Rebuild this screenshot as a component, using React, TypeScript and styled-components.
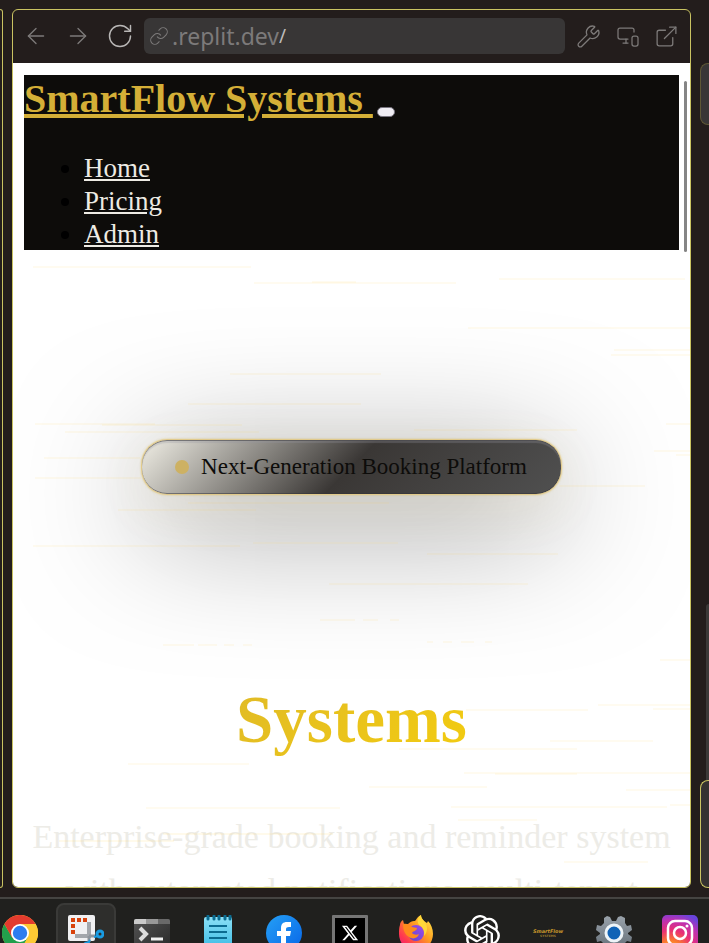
import React from "react";
import styled, { createGlobalStyle, css } from "styled-components";
import { ExternalLink, Link, MonitorSmartphone, RotateCw, Wrench, ArrowLeft, ArrowRight } from "lucide-react";
import { SiOpenai } from "react-icons/si";
import { FaXTwitter } from "react-icons/fa6";

const outline = "#c9c362";

const GlobalStyle = createGlobalStyle`
  * { box-sizing: border-box; }
  body { margin: 0; background: #231d1c; }
  button { font: inherit; }
`;

const Desktop = styled.div`
  display: flex;
  flex-direction: column;
  height: 100vh;
  overflow: hidden;
  background: #231d1c;
`;

const Workspace = styled.main`
  flex: 1;
  min-height: 0;
  display: flex;
  gap: 9px;
  padding: 9px 0;
`;

const EdgePane = styled.div`
  width: 3px;
  border: 1px solid ${outline};
  border-left: 0;
  border-radius: 0 6px 6px 0;
`;

const BrowserPane = styled.section`
  flex: 1;
  min-width: 0;
  display: flex;
  flex-direction: column;
  border: 1px solid ${outline};
  border-radius: 6px;
  overflow: hidden;
`;

const Toolbar = styled.header`
  display: flex;
  align-items: center;
  height: 53px;
  padding: 0 4px 1px 2px;
`;

const ToolButton = styled.button<{ $bright?: boolean; $narrow?: boolean }>`
  display: flex;
  align-items: center;
  justify-content: center;
  width: ${(p) => (p.$narrow ? 39 : 42)}px;
  height: 36px;
  padding: 0;
  border: 0;
  background: none;
  color: ${(p) => (p.$bright ? "#b9b7b6" : "#7d7a79")};
`;

const ToolGroup = styled.div`
  display: flex;
  margin-left: 4px;
`;

const AddressBar = styled.form`
  flex: 1;
  min-width: 0;
  display: flex;
  align-items: center;
  height: 36px;
  margin-left: 3px;
  padding: 0 5px;
  border-radius: 6px;
  background: #383636;
  color: #7c7a7a;
  font-family: "Noto Sans", sans-serif;
`;

const AddressHost = styled.label`
  display: flex;
  align-items: center;
  gap: 3px;
  font-size: 23px;
  line-height: 36px;
`;

const AddressPath = styled.input`
  flex: 1;
  min-width: 0;
  padding: 0;
  border: 0;
  outline: 0;
  background: none;
  color: #bdbbbb;
  font-family: inherit;
  font-size: 19px;
  line-height: 36px;
`;

const Page = styled.div`
  position: relative;
  flex: 1;
  min-height: 0;
  padding: 12px 11px 0;
  overflow: hidden;
  background: #fff;
  color: #000;
  font-family: "Liberation Serif", serif;
  font-size: 27px;
`;

const ScrollThumb = styled.div`
  position: absolute;
  top: 18px;
  right: 3px;
  width: 3px;
  height: 171px;
  border-radius: 2px;
  background: #858585;
`;

const StreakLayer = styled.svg`
  position: absolute;
  inset: 0;
  width: 100%;
  height: 100%;
  pointer-events: none;
`;

const SiteNav = styled.nav`
  height: 175px;
  background: #0d0c0a;
`;

const BrandRow = styled.div`
  display: flex;
  align-items: flex-start;
  height: 48px;
  line-height: 48px;
`;

const Brand = styled.a`
  color: #d4af37;
  font-size: 40px;
  font-weight: 700;
  text-decoration-thickness: 4px;
  white-space: pre;
`;

const MenuToggle = styled.button`
  width: 18px;
  height: 10px;
  margin: 32px 0 0 4px;
  padding: 0;
  border: 1px solid #77747f;
  border-radius: 5px;
  background: #efedf3;
`;

const NavList = styled.ul`
  margin: 29px 0 0;
  padding: 0 0 0 60px;
  line-height: 33px;
`;

const NavLink = styled.a`
  color: #edebe4;
`;

const Hero = styled.section`
  display: flex;
  flex-direction: column;
  align-items: center;
  padding-top: 189px;
`;

const Badge = styled.div`
  display: flex;
  align-items: center;
  gap: 12px;
  height: 56px;
  padding: 0 34px 0 33px;
  border: 1px solid rgba(212, 180, 90, 0.7);
  border-radius: 26px;
  background: linear-gradient(135deg, #f0eee5 0%, #3a3735 50%, #505050 100%) padding-box;
  box-shadow:
    0 0 2px rgba(212, 175, 55, 0.6),
    0 13px 53px rgba(212, 175, 55, 0.08),
    0 26px 132px rgba(0, 0, 0, 0.52),
    inset 0 1px 0 rgba(70, 70, 75, 0.6),
    inset 0 3px 1px rgba(150, 150, 160, 0.3),
    inset 0 -1px 0 rgba(50, 50, 60, 0.5);
  color: #0d0c0a;
  font-size: 23px;
  white-space: nowrap;
`;

const BadgeDot = styled.span`
  width: 14px;
  height: 14px;
  border-radius: 50%;
  background: #cdb163;
`;

const Title = styled.h1`
  align-self: stretch;
  margin: 184px 0 0;
  background: linear-gradient(135deg, #d4af37 0%, #ffd700 100%);
  background-clip: text;
  -webkit-background-clip: text;
  color: transparent;
  font-size: 67px;
  line-height: 80px;
  text-align: center;
`;

const Lead = styled.p`
  margin: 51px 0 0;
  color: #edece7;
  font-size: 34px;
  line-height: 54px;
  text-align: center;
`;

const SideColumn = styled.aside`
  display: flex;
  flex-direction: column;
  align-items: flex-end;
  width: 9px;
  padding-top: 54px;
`;

const SideCard = styled.div<{ $kind: "muted" | "rail" | "outlined" }>`
  ${(p) =>
    p.$kind === "muted" &&
    css`
      width: 9px;
      height: 62px;
      border: 1px solid #5d5735;
      border-right: 0;
      border-radius: 8px 0 0 8px;
      background: #383636;
    `}
  ${(p) =>
    p.$kind === "rail" &&
    css`
      width: 3px;
      height: 176px;
      margin-top: auto;
      border-radius: 3px 0 0 0;
      background: #3b3938;
    `}
  ${(p) =>
    p.$kind === "outlined" &&
    css`
      width: 9px;
      height: 108px;
      border: 1px solid ${outline};
      border-right: 0;
      border-radius: 8px 0 0 8px;
      background: #343131;
    `}
`;

const Taskbar = styled.footer`
  display: flex;
  gap: 6px;
  height: 46px;
  padding-top: 4px;
  border-top: 2px solid #454442;
  overflow: hidden;
  background: #20201e;
`;

const TaskButton = styled.button<{ $active?: boolean }>`
  flex: none;
  display: flex;
  align-items: center;
  justify-content: center;
  width: 60px;
  height: 60px;
  padding: 0;
  border: 2px solid ${(p) => (p.$active ? "#3a3a38" : "transparent")};
  border-radius: 8px;
  background: ${(p) => (p.$active ? "#2e2e2c" : "none")};
  color: #fff;
  &:first-child { margin-left: -10px; }
`;

const XTile = styled.span`
  display: flex;
  align-items: center;
  justify-content: center;
  width: 36px;
  height: 36px;
  border: 3px solid #757575;
  border-radius: 1px;
  background: #000;
  font-size: 18px;
`;

const BrandMark = styled.span`
  display: flex;
  flex-direction: column;
  align-items: center;
  color: #c9992b;
  font: italic 700 5px/6px "DejaVu Sans", sans-serif;
  small { color: #9a7a2c; font: 700 3px/4px "DejaVu Sans", sans-serif; }
`;

/* x1, x2, y, opacity */
const streaks: [number, number, number, number?][] = [
  [20, 238, 204], [241, 443, 220], [299, 343, 219], [486, 672, 216], [455, 677, 265],
  [601, 677, 287], [598, 677, 292], [217, 368, 311], [175, 348, 341], [22, 142, 361],
  [89, 229, 362], [52, 246, 369], [401, 564, 367], [653, 677, 361], [31, 127, 395],
  [22, 128, 415], [641, 677, 388], [663, 677, 392], [546, 632, 423], [175, 376, 440],
  [105, 243, 447], [20, 227, 483], [240, 385, 480], [414, 545, 491], [316, 515, 521],
  [307, 342, 557], [350, 365, 557], [377, 386, 557], [150, 181, 582], [185, 204, 582],
  [211, 221, 582], [230, 239, 582], [414, 420, 579], [430, 439, 579], [448, 461, 579],
  [472, 479, 579], [647, 677, 597], [585, 677, 642], [640, 677, 646], [453, 575, 647],
  [537, 640, 678], [386, 564, 686], [115, 236, 701], [451, 677, 710], [482, 564, 711],
  [356, 474, 724], [613, 677, 727], [657, 677, 742], [133, 327, 745], [438, 654, 744],
  [445, 524, 757], [150, 320, 771, 0.12], [46, 161, 778, 0.12], [551, 635, 799],
];

const Streaks = () => (
  <StreakLayer viewBox="0 0 677 824" preserveAspectRatio="xMidYMin slice" aria-hidden="true">
    {streaks.map(([x1, x2, y, o], i) => (
      <line key={i} x1={x1} x2={x2} y1={y} y2={y} stroke="#ffd75e" strokeWidth="2" strokeOpacity={o ?? 0.09} />
    ))}
  </StreakLayer>
);

const ChromeIcon = () => (
  <svg width="36" height="36" viewBox="0 0 36 36">
    <circle cx="18" cy="18" r="18" fill="#fcc934" />
    <path d="M2.4 9A18 18 0 0 0 18 36L25.8 22.5 10.2 22.5Z" fill="#229f4c" />
    <path d="M18 9h15.600A18 18 0 0 1 18 36L25.800 22.500Z" fill="#fcc934" />
    <path d="M2.400 9A18 18 0 0 1 33.600 9H18L10 22.500Z" fill="#e33b2e" />
    <circle cx="18" cy="18" r="9" fill="#fff" />
    <circle cx="18" cy="18" r="7.200" fill="#2d7df0" />
  </svg>
);

const SnipIcon = () => (
  <svg width="36" height="36" viewBox="0 0 36 36">
    <rect width="27" height="26" rx="2" fill="#f0f0f2" />
    <path d="M19 7h4v16H7v-4h12Z" fill="#a3a6ab" />
    <path d="M3 3h4v4H3zM9 3h4v4H9zM15 3h4v4h-4zM3 9h4v4H3zM3 15h4v4H3z" fill="#d8410b" />
    <path d="M21 21h6M21 21v6" stroke="#8f959d" strokeWidth="3" />
    <circle cx="32" cy="19" r="3" fill="none" stroke="#199be2" strokeWidth="3" />
    <circle cx="19" cy="31" r="3" fill="none" stroke="#199be2" strokeWidth="3" />
    <path d="m26 22 4-1M22 25l-2 3" stroke="#199be2" strokeWidth="2" />
  </svg>
);

const TerminalIcon = () => (
  <svg width="36" height="36" viewBox="0 0 36 36">
    <defs>
      <linearGradient id="term" x1="0" y1="0" x2="1" y2="1">
        <stop offset="0" stopColor="#535353" /><stop offset="1" stopColor="#292929" />
      </linearGradient>
    </defs>
    <rect y="4" width="36" height="32" rx="2" fill="url(#term)" />
    <path d="M0 9V6a2 2 0 0 1 2-2h10v5Z" fill="#cacaca" />
    <path d="M12 4h12v5H12Z" fill="#989898" />
    <path d="M24 4h10a2 2 0 0 1 2 2v3H24Z" fill="#696969" />
    <path d="m6 13 6 6-6 6" fill="none" stroke="#dcdcdc" strokeWidth="4" />
    <path d="M17 24h12" stroke="#f1f1f1" strokeWidth="3" />
  </svg>
);

const NotepadIcon = () => (
  <svg width="36" height="36" viewBox="0 0 36 36">
    <defs>
      <linearGradient id="note" x1="0" y1="0" x2="0" y2="1">
        <stop offset="0" stopColor="#8ce0f5" /><stop offset="1" stopColor="#35b9e4" />
      </linearGradient>
    </defs>
    <rect x="4" y="2" width="28" height="34" rx="2" fill="url(#note)" />
    <path d="M8 1v3M14 1v3M19 1v3M25 1v3M30 1v3" stroke="#0b6c91" strokeWidth="3" strokeLinecap="round" />
    <path d="M9 11h18M9 17h18M9 23h18M9 29h10" stroke="#0b6c91" strokeWidth="2" />
  </svg>
);

const FacebookIcon = () => (
  <svg width="36" height="36" viewBox="0 0 36 36">
    <defs>
      <linearGradient id="fb" x1="0" y1="0" x2="1" y2="1">
        <stop offset="0" stopColor="#25a0f5" /><stop offset="1" stopColor="#0866e8" />
      </linearGradient>
    </defs>
    <circle cx="18" cy="18" r="18" fill="url(#fb)" />
    <path d="M15 36V21h-4v-5h4v-3c0-4 2-6 6-6h4v5h-2c-2 0-3 .8-3 2v2h5l-1 5h-4v15Z" fill="#fff" />
  </svg>
);

const FirefoxIcon = () => (
  <svg width="36" height="36" viewBox="0 0 36 36">
    <defs>
      <linearGradient id="fox" x1="1" y1="0" x2="0" y2="1">
        <stop offset="0" stopColor="#fff34d" /><stop offset="0.400" stopColor="#ff9c20" />
        <stop offset="0.750" stopColor="#ff3650" /><stop offset="1" stopColor="#e31587" />
      </linearGradient>
      <linearGradient id="globe" x1="1" y1="0" x2="0" y2="1">
        <stop offset="0" stopColor="#a04bec" /><stop offset="1" stopColor="#5b46c9" />
      </linearGradient>
    </defs>
    <path d="M2 10c0-2 1-4 3-5l1 4 4 0c2-2 4-3 6-3l1 0c2-2 2-4 6-6 0 4 3 6 6 8l1-2c3 3 5 8 5 13a17 17 0 0 1-34 0c0-4 0-6 1-9Z" fill="url(#fox)" />
    <circle cx="18" cy="18" r="8" fill="url(#globe)" />
    <path d="M5 9c3-1 7 0 9 3l5 1c0 3-4 3-5 5 2 2 5 2 7 1-1 4-6 6-10 3C7 20 5 15 5 9Z" fill="#ff8a1c" />
    <path d="M23 0c-4 3-4 7-2 10 4 2 6 6 5 11 4-4 4-11 0-15-2-2-3-4-3-6Z" fill="#ffd83a" />
  </svg>
);

const GearIcon = () => (
  <svg width="36" height="36" viewBox="0 0 36 36">
    <defs>
      <linearGradient id="gear" x1="0" y1="0" x2="0" y2="1">
        <stop offset="0" stopColor="#99a2aa" /><stop offset="1" stopColor="#626c76" />
      </linearGradient>
    </defs>
    <path d="M11 1l3 1 2 4h4l2-4 3-1 4 2v5l2 3 4-1 1 5-4 3 0 1 4 3-1 5-4-1-3 3v5l-5 2-3-4h-4l-3 4-5-2v-5l-3-3-4 1-1-5 4-3 0-1-4-3 1-5 4 1 3-3V3Z" fill="url(#gear)" strokeLinejoin="round" />
    <circle cx="18" cy="18" r="8" fill="#1063b6" stroke="#eef4f8" strokeWidth="3" />
  </svg>
);

const InstagramIcon = () => (
  <svg width="36" height="36" viewBox="0 0 36 36">
    <defs>
      <radialGradient id="ig" cx="0.250" cy="1.050" r="1.150">
        <stop offset="0" stopColor="#ffd13f" /><stop offset="0.300" stopColor="#fb7a2d" />
        <stop offset="0.550" stopColor="#e92f75" /><stop offset="0.800" stopColor="#bb31b4" />
        <stop offset="1" stopColor="#6844dc" />
      </radialGradient>
    </defs>
    <rect width="36" height="36" rx="5" fill="url(#ig)" />
    <rect x="6" y="6" width="24" height="24" rx="7" fill="none" stroke="#fff" strokeWidth="2.500" />
    <circle cx="18" cy="18" r="6" fill="none" stroke="#fff" strokeWidth="2.500" />
    <circle cx="25" cy="11" r="1.500" fill="#fff" />
  </svg>
);

const tasks: { name: string; icon: React.ReactNode; active?: boolean }[] = [
  { name: "Chrome", icon: <ChromeIcon /> },
  { name: "Snipping Tool", icon: <SnipIcon />, active: true },
  { name: "Terminal", icon: <TerminalIcon /> },
  { name: "Notepad", icon: <NotepadIcon /> },
  { name: "Facebook", icon: <FacebookIcon /> },
  { name: "X", icon: <XTile><FaXTwitter /></XTile> },
  { name: "Firefox", icon: <FirefoxIcon /> },
  { name: "ChatGPT", icon: <SiOpenai size={36} /> },
  { name: "SmartFlow Systems", icon: <BrandMark>SmartFlow<small>SYSTEMS</small></BrandMark> },
  { name: "Settings", icon: <GearIcon /> },
  { name: "Instagram", icon: <InstagramIcon /> },
];

export default function App() {
  return (
    <Desktop>
      <GlobalStyle />
      <Workspace>
        <EdgePane />
        <BrowserPane>
          <Toolbar>
            <ToolButton type="button" aria-label="Back"><ArrowLeft size={26} strokeWidth={1.25} /></ToolButton>
            <ToolButton type="button" aria-label="Forward"><ArrowRight size={26} strokeWidth={1.25} /></ToolButton>
            <ToolButton type="button" aria-label="Reload" $bright><RotateCw size={28} strokeWidth={1.25} /></ToolButton>
            <AddressBar>
              <AddressHost htmlFor="path"><Link size={20} strokeWidth={1.25} />.replit.dev</AddressHost>
              <AddressPath id="path" defaultValue="/" />
            </AddressBar>
            <ToolGroup>
              <ToolButton type="button" aria-label="Developer tools" $narrow><Wrench size={25} strokeWidth={1.25} /></ToolButton>
              <ToolButton type="button" aria-label="Device size" $narrow><MonitorSmartphone size={24} strokeWidth={1.25} /></ToolButton>
              <ToolButton type="button" aria-label="Open in new tab" $narrow><ExternalLink size={25} strokeWidth={1.25} /></ToolButton>
            </ToolGroup>
          </Toolbar>
          <Page>
            <SiteNav>
              <BrandRow>
                <Brand href="#">SmartFlow Systems </Brand>
                <MenuToggle type="button" aria-label="Menu" />
              </BrandRow>
              <NavList>
                <li><NavLink href="#home">Home</NavLink></li>
                <li><NavLink href="#pricing">Pricing</NavLink></li>
                <li><NavLink href="#admin">Admin</NavLink></li>
              </NavList>
            </SiteNav>
            <Hero>
              <Badge><BadgeDot />Next-Generation Booking Platform</Badge>
              <Title>Systems</Title>
              <Lead>Enterprise-grade booking and reminder system with automated notifications, multi-tenant</Lead>
            </Hero>
            <Streaks />
            <ScrollThumb />
          </Page>
        </BrowserPane>
        <SideColumn>
          <SideCard $kind="muted" />
          <SideCard $kind="rail" />
          <SideCard $kind="outlined" />
        </SideColumn>
      </Workspace>
      <Taskbar>
        {tasks.map((t) => (
          <TaskButton key={t.name} type="button" aria-label={t.name} $active={t.active}>{t.icon}</TaskButton>
        ))}
      </Taskbar>
    </Desktop>
  );
}
